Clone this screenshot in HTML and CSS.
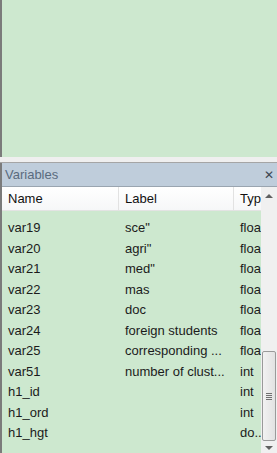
FILE: index.html
```html
<!DOCTYPE html>
<html lang="en">
<head>
    <meta charset="UTF-8">
    <title>Variables</title>
    <link rel="stylesheet" href="styles.css">
</head>
<body>
    <div class="workspace"></div>
    <div class="splitter"></div>

    <div class="panel">
        <div class="panel-title">
            <span>Variables</span>
            <span class="close-btn">&#x2715;</span>
        </div>
        <div class="grid-wrap">
            <div class="grid">
                <div class="grid-head">
                    <div class="col-name">Name</div>
                    <div class="col-label">Label</div>
                    <div class="col-type">Typ</div>
                </div>
                <div class="grid-body">
                    <div class="row"><div class="col-name">var19</div><div class="col-label">sce"</div><div class="col-type">floa</div></div>
                    <div class="row"><div class="col-name">var20</div><div class="col-label">agri"</div><div class="col-type">floa</div></div>
                    <div class="row"><div class="col-name">var21</div><div class="col-label">med"</div><div class="col-type">floa</div></div>
                    <div class="row"><div class="col-name">var22</div><div class="col-label">mas</div><div class="col-type">floa</div></div>
                    <div class="row"><div class="col-name">var23</div><div class="col-label">doc</div><div class="col-type">floa</div></div>
                    <div class="row"><div class="col-name">var24</div><div class="col-label">foreign students</div><div class="col-type">floa</div></div>
                    <div class="row"><div class="col-name">var25</div><div class="col-label">corresponding ...</div><div class="col-type">floa</div></div>
                    <div class="row"><div class="col-name">var51</div><div class="col-label">number of clust...</div><div class="col-type">int</div></div>
                    <div class="row"><div class="col-name">h1_id</div><div class="col-label"></div><div class="col-type">int</div></div>
                    <div class="row"><div class="col-name">h1_ord</div><div class="col-label"></div><div class="col-type">int</div></div>
                    <div class="row"><div class="col-name">h1_hgt</div><div class="col-label"></div><div class="col-type">do..</div></div>
                </div>
            </div>
            <div class="scrollbar">
                <div class="arrow up"></div>
                <div class="track">
                    <div class="thumb"><span class="grip"></span></div>
                </div>
                <div class="arrow down"></div>
            </div>
        </div>
    </div>
</body>
</html>
```

FILE: styles.css
```css
body {
    margin: 0;
    width: 277px;
    height: 453px;
    overflow: hidden;
    font-family: "Liberation Sans", Arial, sans-serif;
    font-size: 13px;
    background: #cde8cf;
}
.workspace {
    height: 157px;
    background: #cde8cf;
    border-left: 2px solid #7b7b7b;
}
.splitter {
    height: 5px;
    background: #efefef;
    border-bottom: 1px solid #a5a5a5;
}
.panel {
    border-left: 2px solid #7b7b7b;
}
.panel-title {
    height: 23px;
    background: #bfcddb;
    color: #5a6b7e;
    display: flex;
    align-items: center;
    justify-content: space-between;
    padding: 0 3px 0 3px;
    border-bottom: 1px solid #9aa5b0;
}
.close-btn {
    font-size: 12px;
    color: #3c4650;
}
.grid-wrap {
    display: flex;
    height: 267px;
}
.grid {
    flex: 1;
    overflow: hidden;
}
.grid-head {
    display: flex;
    height: 23px;
    align-items: center;
    background: linear-gradient(#ffffff, #f6f7f8);
    border-bottom: 1px solid #e3e3e3;
    color: #111;
}
.grid-head > div {
    height: 23px;
    line-height: 23px;
    border-right: 1px solid #e2e2e2;
}
.grid-head .col-type {
    border-right: none;
}
.grid-body {
    background: #cde8cf;
    padding-top: 7px;
}
.row {
    display: flex;
    height: 20.5px;
    line-height: 20.5px;
    color: #1b1b1b;
}
.col-name {
    width: 117px;
    padding-left: 6px;
    box-sizing: border-box;
    white-space: nowrap;
    overflow: hidden;
}
.col-label {
    width: 115px;
    padding-left: 6px;
    box-sizing: border-box;
    white-space: nowrap;
    overflow: hidden;
}
.col-type {
    flex: 1;
    padding-left: 6px;
    white-space: nowrap;
    overflow: hidden;
}
.scrollbar {
    width: 16px;
    background: #f0f0f0;
    display: flex;
    flex-direction: column;
}
.arrow {
    height: 17px;
    position: relative;
}
.arrow.down {
    height: 13px;
}
.arrow::after {
    content: "";
    position: absolute;
    left: 4px;
    top: 7px;
    border-left: 4px solid transparent;
    border-right: 4px solid transparent;
}
.arrow.down::after {
    top: 5px;
}
.arrow.up::after {
    border-bottom: 4px solid #606060;
}
.arrow.down::after {
    border-top: 4px solid #606060;
}
.track {
    flex: 1;
    display: flex;
    flex-direction: column;
    justify-content: flex-end;
}
.thumb {
    height: 88px;
    margin: 0 1px;
    border: 1px solid #9a9a9a;
    border-radius: 2px;
    background: linear-gradient(to right, #f2f2f2, #e2e2e2);
    display: flex;
    align-items: center;
    justify-content: center;
}
.grip {
    width: 6px;
    height: 7px;
    background: repeating-linear-gradient(#707070 0 1px, transparent 1px 2px);
}
```
